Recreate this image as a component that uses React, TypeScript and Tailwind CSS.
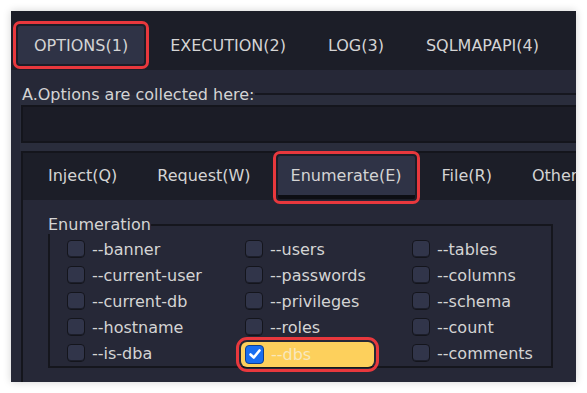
import React from 'react';

interface TabProps {
  label: string;
  active?: boolean;
}

const TopTab: React.FC<TabProps> = ({ label, active }) => (
  <div
    className={`flex h-[38px] shrink-0 items-center rounded-[2px] px-4 ${
      active ? 'bg-[#2f3346] outline-solid outline-[3px] outline-offset-2 outline-[#e8383d]' : ''
    }`}
  >
    {label}
  </div>
);

const SubTab: React.FC<TabProps> = ({ label, active }) => (
  <div
    className={`flex h-[43px] shrink-0 items-center px-[13px] ${
      active
        ? 'rounded-[2px] border-b-4 border-[#0d0e13] bg-[#2f3346] outline-solid outline-[3px] outline-offset-2 outline-[#e8383d]'
        : 'pb-[4px]'
    }`}
  >
    {label}
  </div>
);

interface OptionProps {
  label: string;
  checked?: boolean;
}

const Option: React.FC<OptionProps> = ({ label, checked }) => (
  <div className="flex h-[26px] items-center">
    <div
      className={`flex h-[25px] items-center gap-[7px] pl-[4px] ${
        checked
          ? 'mt-[2px] w-[133px] rounded-[6px] bg-[#fdd05c] text-[#f8e8bd] outline-solid outline-[3px] outline-offset-2 outline-[#e8383d]'
          : ''
      }`}
    >
      {checked ? (
        <span className="flex h-[19px] w-[19px] items-center justify-center rounded-[4px] border border-[#0f3f8f] bg-[#1a6ef0]">
          <svg width="14" height="14" viewBox="0 0 14 14">
            <polyline points="2.5,7.5 5.8,10.5 11.5,3.5" fill="none" stroke="#fff" strokeWidth="2.6" strokeLinecap="round" strokeLinejoin="round" />
          </svg>
        </span>
      ) : (
        <span className="h-[18px] w-[18px] rounded-[4px] border border-[#14151c] bg-[#31354a] shadow-[inset_0_-1px_0_#1c1e2a]" />
      )}
      <span>{label}</span>
    </div>
  </div>
);

const options: OptionProps[] = [
  { label: '--banner' },
  { label: '--users' },
  { label: '--tables' },
  { label: '--current-user' },
  { label: '--passwords' },
  { label: '--columns' },
  { label: '--current-db' },
  { label: '--privileges' },
  { label: '--schema' },
  { label: '--hostname' },
  { label: '--roles' },
  { label: '--count' },
  { label: '--is-dba' },
  { label: '--dbs', checked: true },
  { label: '--comments' },
];

const App: React.FC = () => {
  return (
    <div className="h-[393px] w-[587px] overflow-hidden bg-white pl-[11px] pt-[11px] font-['DejaVu_Sans',sans-serif] text-[16px] leading-[19px] text-[#d4d4d4]">
      <div className="flex h-[371px] w-[565px] flex-col overflow-hidden bg-[#262837] shadow-[0_0_8px_rgba(0,0,0,0.18)]">
        {/* top tabs */}
        <div className="flex h-[59px] shrink-0 items-start gap-[10px] bg-[#1c1e28] pl-[7px] pt-[15px]">
          <TopTab label="OPTIONS(1)" active />
          <TopTab label="EXECUTION(2)" />
          <TopTab label="LOG(3)" />
          <TopTab label="SQLMAPAPI(4)" />
        </div>

        {/* options collector */}
        <div className="ml-[9px] mt-[23px] w-[600px] shrink-0 border-t-2 border-[#16171f] bg-[#2a2d3c] pb-[8px]">
          <div className="-mt-[10px] flex">
            <span className="bg-[linear-gradient(to_bottom,#262837_50%,#2a2d3c_50%)] pl-[2px] pr-[1px]">
              A.Options are collected here:
            </span>
          </div>
          <div className="ml-[1px] mt-[1px] h-[38px] border-2 border-[#14151c] bg-[#1b1c26]" />
        </div>

        {/* sub panel */}
        <div className="ml-[10px] w-[600px] flex-1 border-l-2 border-t-2 border-[#14151c]">
          <div className="flex h-[47px] items-start gap-[14px] bg-[#1c1e28] pl-[12px] pt-[3px]">
            <SubTab label="Inject(Q)" />
            <SubTab label="Request(W)" />
            <SubTab label="Enumerate(E)" active />
            <SubTab label="File(R)" />
            <SubTab label="Other(T)" />
          </div>

          <fieldset className="ml-[25px] mt-[15px] w-[505px] border-2 border-[#15161d] pt-[2px]">
            <legend className="-ml-[2px]">Enumeration</legend>
            <div className="grid grid-cols-[178px_167px_1fr] pl-[13px]">
              {options.map((o) => (
                <Option key={o.label} label={o.label} checked={o.checked} />
              ))}
            </div>
          </fieldset>
        </div>
      </div>
    </div>
  );
};

export default App;
